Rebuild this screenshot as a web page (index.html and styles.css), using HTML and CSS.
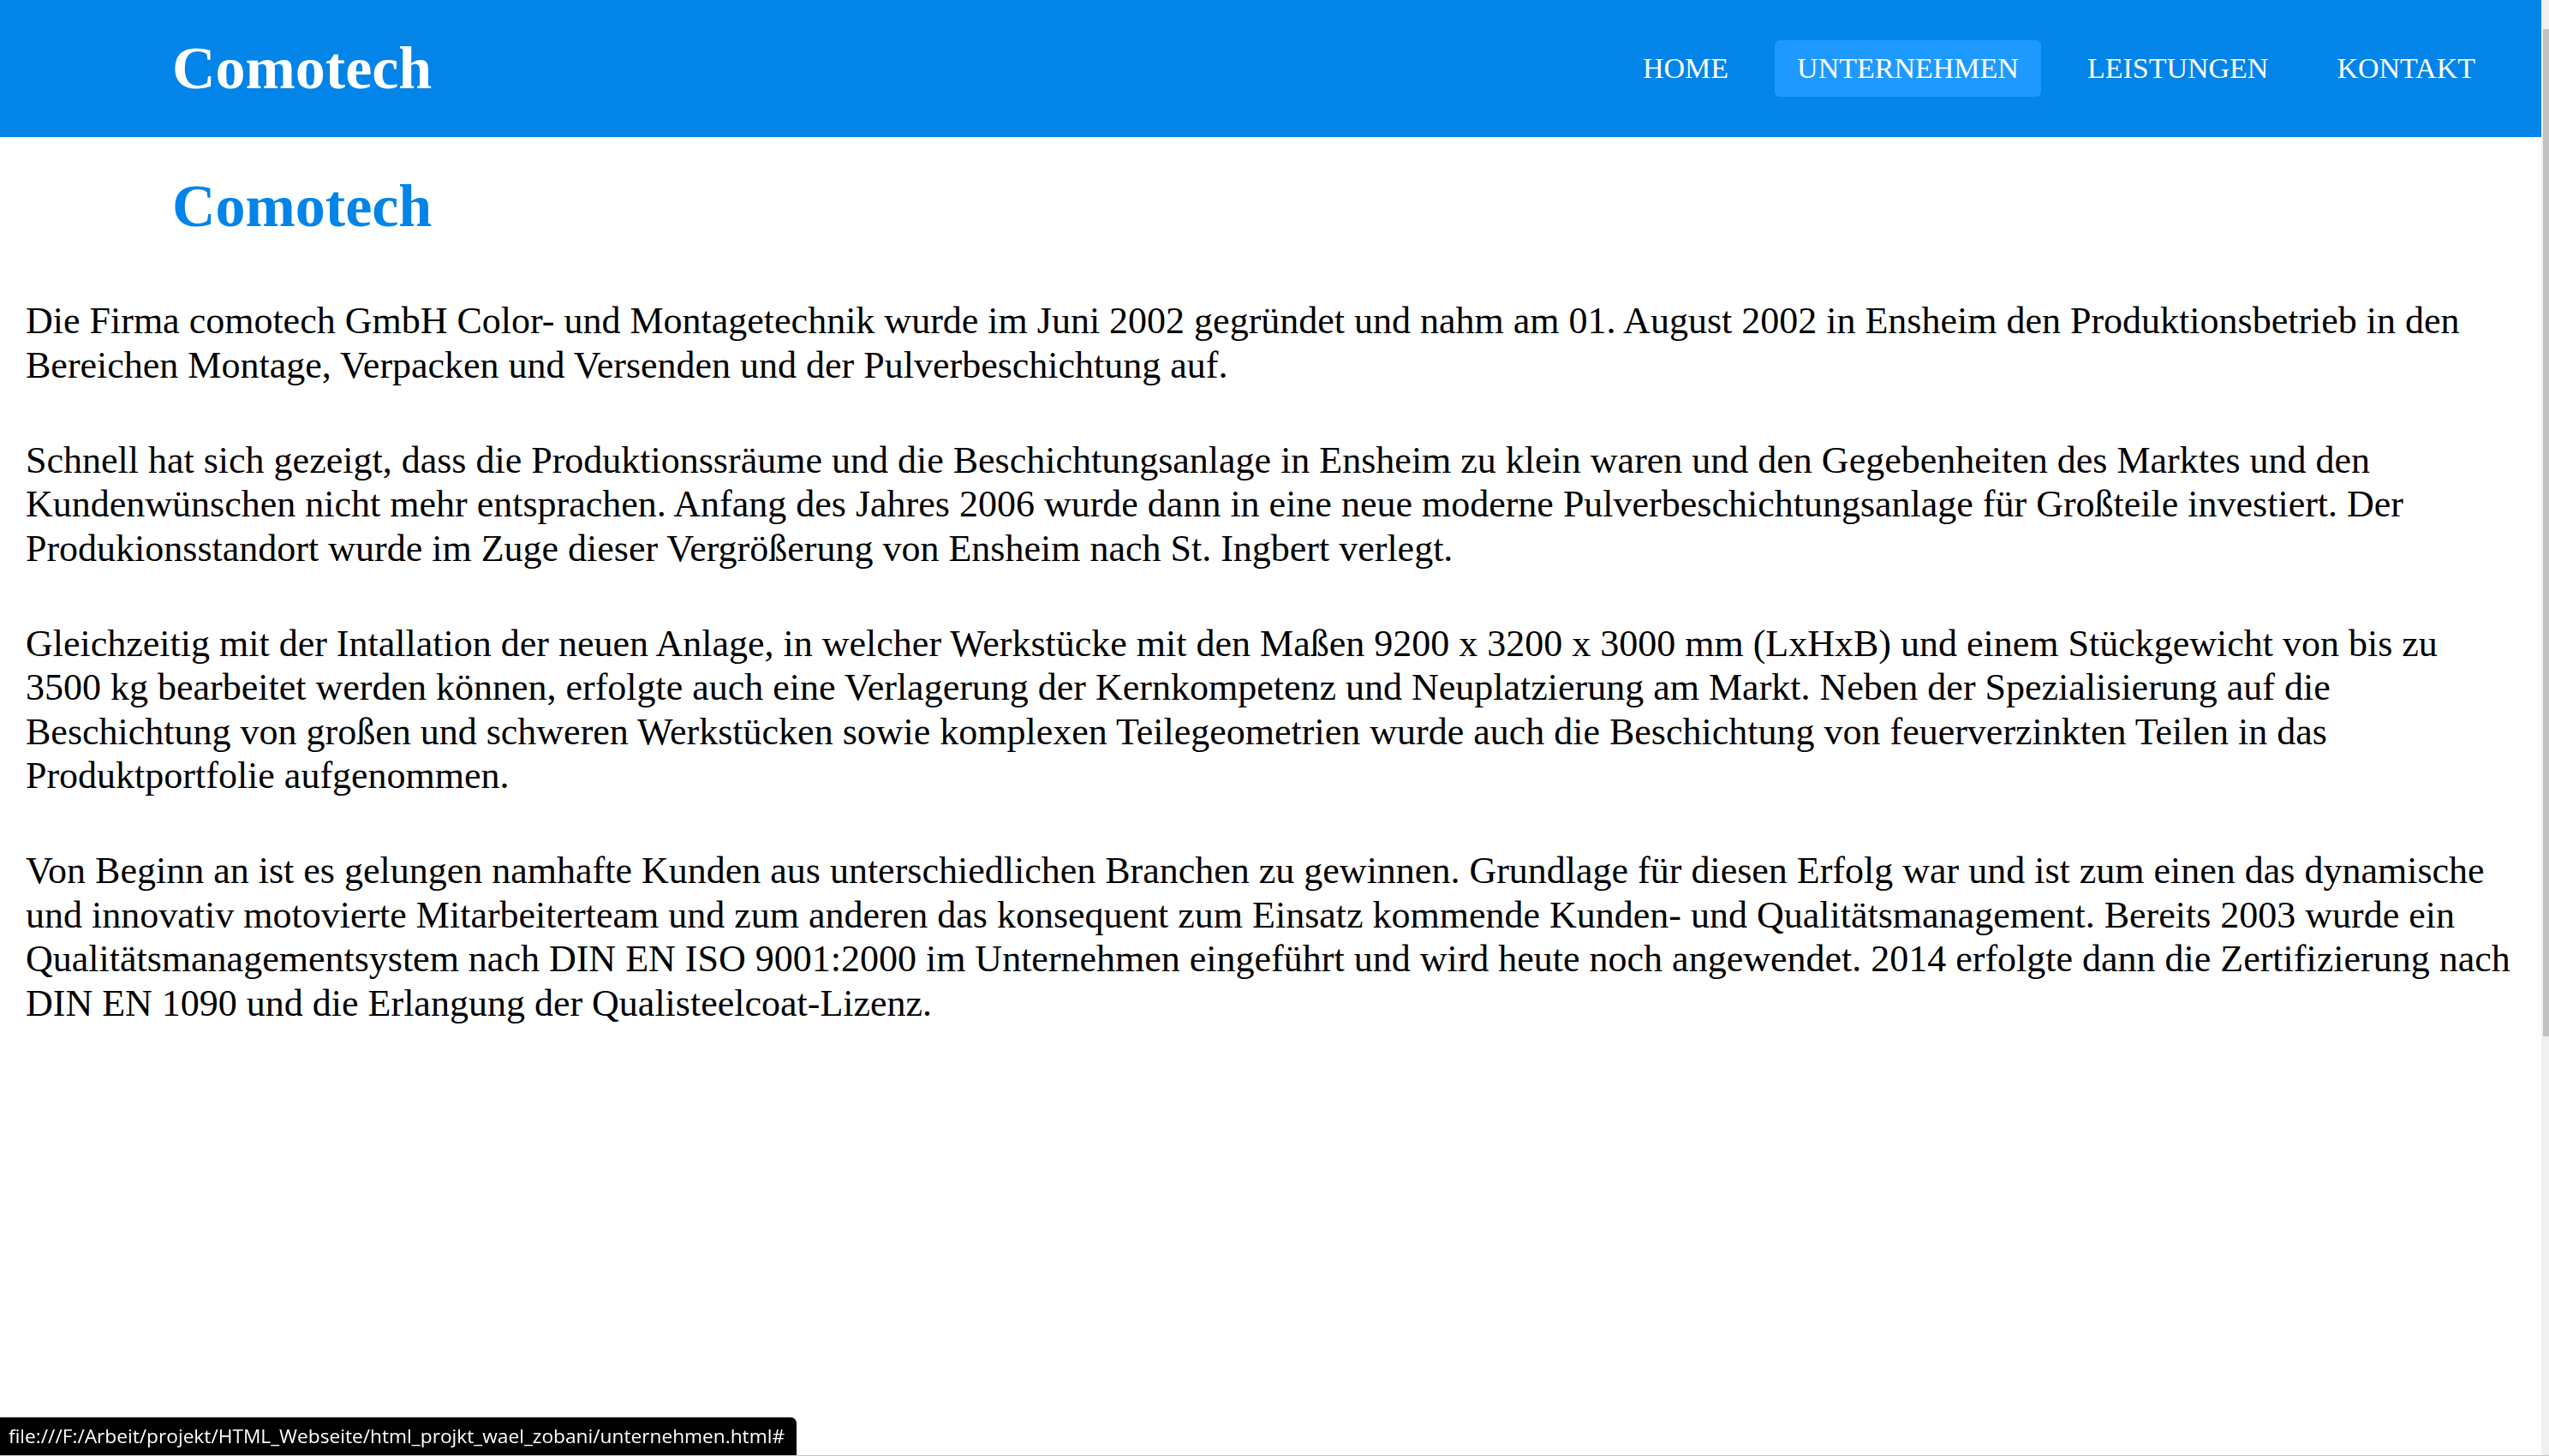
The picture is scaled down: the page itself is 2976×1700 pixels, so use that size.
FILE: index.html
```html
<!DOCTYPE html>
<html lang="de">
<head>
<meta charset="utf-8">
<title>Comotech - Unternehmen</title>
<link rel="stylesheet" href="styles.css">
</head>
<body>
<header class="site-header">
  <div class="logo">Comotech</div>
  <nav class="main-nav">
    <a class="nav-item" href="#">HOME</a>
    <a class="nav-item active" href="#">UNTERNEHMEN</a>
    <a class="nav-item" href="#">LEISTUNGEN</a>
    <a class="nav-item" href="#">KONTAKT</a>
  </nav>
</header>
<main class="content">
  <h1 class="page-title">Comotech</h1>
  <p>Die Firma comotech GmbH Color- und Montagetechnik wurde im Juni 2002 gegründet und nahm am 01. August 2002 in Ensheim den Produktionsbetrieb in den Bereichen Montage, Verpacken und Versenden und der Pulverbeschichtung auf.</p>
  <p>Schnell hat sich gezeigt, dass die Produktionssräume und die Beschichtungsanlage in Ensheim zu klein waren und den Gegebenheiten des Marktes und den Kundenwünschen nicht mehr entsprachen. Anfang des Jahres 2006 wurde dann in eine neue moderne Pulverbeschichtungsanlage für Großteile investiert. Der Produkionsstandort wurde im Zuge dieser Vergrößerung von Ensheim nach St. Ingbert verlegt.</p>
  <p>Gleichzeitig mit der Intallation der neuen Anlage, in welcher Werkstücke mit den Maßen 9200 x 3200 x 3000 mm (LxHxB) und einem Stückgewicht von bis zu 3500 kg bearbeitet werden können, erfolgte auch eine Verlagerung der Kernkompetenz und Neuplatzierung am Markt. Neben der Spezialisierung auf die Beschichtung von großen und schweren Werkstücken sowie komplexen Teilegeometrien wurde auch die Beschichtung von feuerverzinkten Teilen in das Produktportfolie aufgenommen.</p>
  <p>Von Beginn an ist es gelungen namhafte Kunden aus unterschiedlichen Branchen zu gewinnen. Grundlage für diesen Erfolg war und ist zum einen das dynamische und innovativ motovierte Mitarbeiterteam und zum anderen das konsequent zum Einsatz kommende Kunden- und Qualitätsmanagement. Bereits 2003 wurde ein Qualitätsmanagementsystem nach DIN EN ISO 9001:2000 im Unternehmen eingeführt und wird heute noch angewendet. 2014 erfolgte dann die Zertifizierung nach DIN EN 1090 und die Erlangung der Qualisteelcoat-Lizenz.</p>
</main>
<div class="status-bar">file:///F:/Arbeit/projekt/HTML_Webseite/html_projkt_wael_zobani/unternehmen.html#</div>
<div class="scrollbar"><div class="scroll-thumb"></div></div>
<div class="window-edge"></div>
</body>
</html>
```
FILE: styles.css
```css
html, body {
  margin: 0;
  padding: 0;
  background: #ffffff;
  overflow: hidden;
}
body {
  font-family: "Liberation Serif", "Times New Roman", serif;
  color: #000000;
}
.site-header {
  height: 160px;
  background: #0284e8;
  display: flex;
  align-items: center;
  justify-content: space-between;
  padding: 0 60px 0 201px;
}
.logo {
  font-size: 70px;
  font-weight: bold;
  color: #ffffff;
}
.main-nav {
  display: flex;
  align-items: center;
  gap: 28px;
}
.nav-item {
  font-size: 34px;
  color: #ffffff;
  text-decoration: none;
  padding: 14px 26px;
  border-radius: 6px;
}
.nav-item.active {
  background: #1e9aff;
}
.content {
  padding: 0 40px 0 30px;
}
.page-title {
  font-size: 70px;
  font-weight: bold;
  color: #0284e8;
  margin: 41px 0 68px 171px;
}
.content p {
  font-size: 44px;
  line-height: 51.5px;
  margin: 0 0 59.5px;
}
.status-bar {
  position: fixed;
  left: 0;
  bottom: 1px;
  height: 44px;
  line-height: 44px;
  padding: 0 14px 0 10px;
  background: #000000;
  color: #ffffff;
  font-family: "Open Sans", "Noto Sans", sans-serif;
  font-size: 22.7px;
  border-top-right-radius: 7px;
  box-shadow: 0 -1px 0 #d0d0d0;
}
.scrollbar {
  position: fixed;
  top: 0;
  right: 0;
  width: 9px;
  height: 1699px;
  background: #f0f0f0;
}
.scroll-thumb {
  margin: 34px 0 0 2px;
  width: 7px;
  height: 1176px;
  background: #c1c1c1;
}
.window-edge {
  position: fixed;
  left: 0;
  right: 0;
  bottom: 0;
  height: 1px;
  background: #c6c6c6;
}
```
